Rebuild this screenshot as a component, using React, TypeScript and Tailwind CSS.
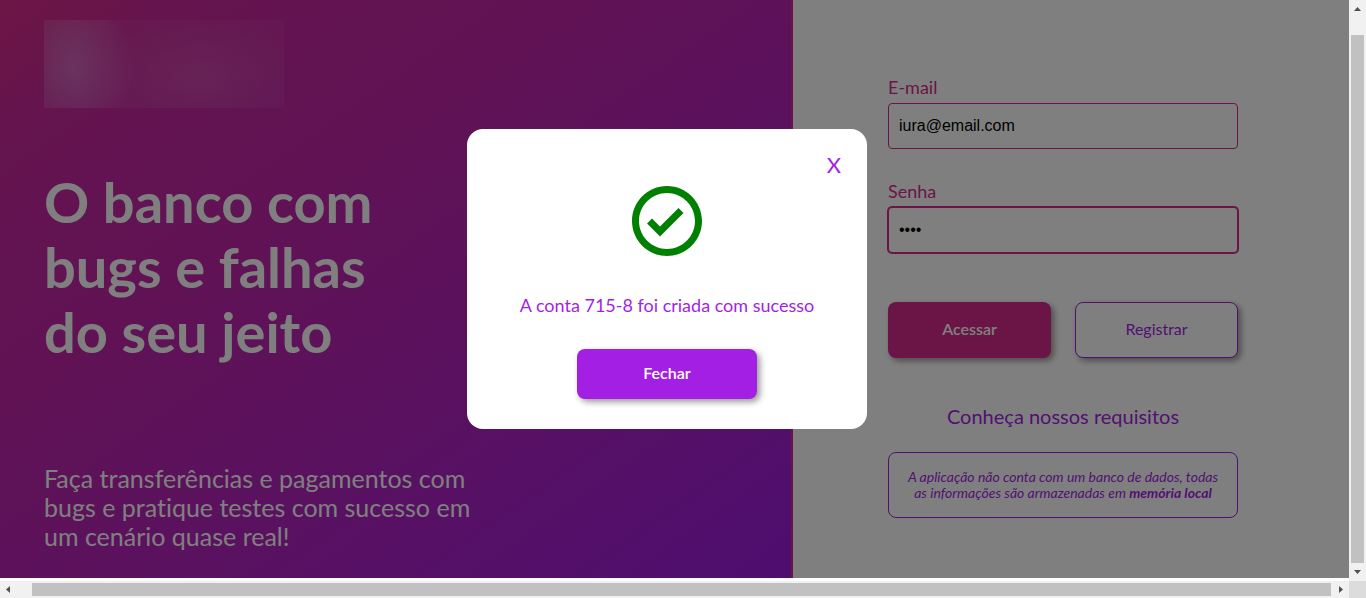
import { useState } from "react";

const buttonBase =
  "rounded-lg pb-0.5 text-base shadow-[3px_3px_6px_rgba(0,0,0,0.4)] cursor-pointer";

function BrandMark() {
  return (
    <div className="h-[88px] w-[240px] bg-white/4 bg-[radial-gradient(ellipse_60px_84px_at_30px_46px,rgba(225,205,255,0.34),rgba(225,205,250,0.18)_50%,rgba(220,200,240,0)),radial-gradient(ellipse_110px_64px_at_155px_58px,rgba(230,220,230,0.13),rgba(230,220,230,0))]" />
  );
}

function Hero() {
  return (
    <section className="flex min-w-0 flex-1 flex-col border-r-2 border-[#d62a8e] bg-[linear-gradient(145deg,#da2c8c_0%,#ca289c_12%,#bd24b0_45%,#a920d0_80%,#9d1bdf_100%)] px-11 pt-5 text-white">
      <BrandMark />
      <h1 className="mt-[61px] max-w-[390px] text-[56px] leading-[65px] font-bold">
        O banco com bugs e falhas do seu jeito
      </h1>
      <p className="mt-[100px] max-w-[440px] text-[25px] leading-[29px]">
        Faça transferências e pagamentos com bugs e pratique testes com sucesso em um cenário quase real!
      </p>
    </section>
  );
}

function LoginForm() {
  const [email, setEmail] = useState("iura@email.com");
  const [password, setPassword] = useState("1234");
  const label = "mb-1 block text-lg leading-6 text-[#d62a8e]";
  const field =
    "h-[46px] w-full rounded border border-[#d62a8e] bg-white px-2.5 font-['Liberation_Sans',sans-serif] text-base text-black outline-none";
  return (
    <section className="w-[556px] shrink-0 bg-white pt-[75px] pr-[111px] pl-[95px]">
      <form onSubmit={(e) => e.preventDefault()}>
        <label htmlFor="email" className={label}>
          E-mail
        </label>
        <input id="email" type="email" value={email} onChange={(e) => setEmail(e.target.value)} className={field} />
        <label htmlFor="password" className={`${label} mt-[30px]`}>
          Senha
        </label>
        <input
          id="password"
          type="password"
          value={password}
          onChange={(e) => setPassword(e.target.value)}
          className={`${field} ring-1 ring-[#d62a8e]`}
        />
        <div className="mt-[49px] grid h-14 grid-cols-2 gap-6">
          <button type="submit" className={`${buttonBase} bg-[#d62a8e] font-semibold text-white`}>
            Acessar
          </button>
          <button type="button" className={`${buttonBase} border border-[#a41fe4] bg-white text-[#a41fe4]`}>
            Registrar
          </button>
        </div>
      </form>
      <a href="#requisitos" className="mt-11 block text-center text-xl leading-7 text-[#a41fe4]">
        Conheça nossos requisitos
      </a>
      <p className="mt-[22px] rounded-lg border border-[#a41fe4] px-4 py-4 text-center text-sm leading-4 text-[#a41fe4] italic">
        A aplicação não conta com um banco de dados, todas as informações são armazenadas em{" "}
        <strong className="font-bold">memória local</strong>
      </p>
    </section>
  );
}

function SuccessModal({ onClose }: { onClose: () => void }) {
  return (
    <div className="absolute inset-0 flex items-center justify-center bg-black/50 pr-[15px] pb-5">
      <div
        role="dialog"
        aria-modal="true"
        aria-labelledby="modal-text"
        className="flex w-[400px] flex-col items-center rounded-2xl bg-white px-5 pt-[21px] pb-[30px] text-[#a41fe4]"
      >
        <button type="button" onClick={onClose} className="mr-1.5 cursor-pointer self-end text-[22px] leading-[30px]">
          X
        </button>
        <svg viewBox="2 2 20 20" className="mt-1.5 size-[70px]" fill="green" aria-hidden="true">
          <path d="M12 2C6.48 2 2 6.48 2 12s4.48 10 10 10 10-4.48 10-10S17.52 2 12 2zm0 18c-4.41 0-8-3.59-8-8s3.59-8 8-8 8 3.59 8 8-3.59 8-8 8zm3.300-11.710L10 13.590l-2.290-2.290-1.410 1.410L10 16.410l6.710-6.710z" />
        </svg>
        <p id="modal-text" className="mt-[37px] text-lg leading-6">
          A conta 715-8 foi criada com sucesso
        </p>
        <button
          type="button"
          onClick={onClose}
          className="mt-8 h-[50px] w-[180px] cursor-pointer rounded-lg bg-[#a41fe4] pb-0.5 text-base font-semibold text-white shadow-[3px_3px_6px_rgba(0,0,0,0.4)]"
        >
          Fechar
        </button>
      </div>
    </div>
  );
}

function VerticalScrollbar() {
  return (
    <div className="flex w-[17px] shrink-0 flex-col items-center bg-[#f1f1f1]" aria-hidden="true">
      <svg width="17" height="17" fill="#505050">
        <path d="M5 11h7L8.500 7z" />
      </svg>
      <div className="mt-[18px] w-[13px] flex-1 bg-[#c1c1c1]" />
      <svg width="17" height="18" fill="#505050">
        <path d="M5 7h7l-3.500 4z" />
      </svg>
    </div>
  );
}

function HorizontalScrollbar() {
  return (
    <div className="flex h-[17px] items-center bg-[#f1f1f1]" aria-hidden="true">
      <svg width="17" height="17" fill="#505050">
        <path d="M10 5v7L6 8.500z" />
      </svg>
      <div className="ml-[15px] h-[13px] flex-1 bg-[#c1c1c1]" />
      <svg width="18" height="17" fill="#505050">
        <path d="M8 5v7l4-3.500z" />
      </svg>
      <div className="h-full w-[17px] bg-[#dcdcdc]" />
    </div>
  );
}

export default function App() {
  const [open, setOpen] = useState(true);
  return (
    <div className="flex h-screen flex-col overflow-hidden bg-white font-['Lato',sans-serif] [font-variant-ligatures:none]">
      <div className="flex min-h-0 flex-1">
        <main className="relative mb-[3px] flex min-w-0 flex-1">
          <Hero />
          <LoginForm />
          {open && <SuccessModal onClose={() => setOpen(false)} />}
        </main>
        <VerticalScrollbar />
      </div>
      <HorizontalScrollbar />
    </div>
  );
}
